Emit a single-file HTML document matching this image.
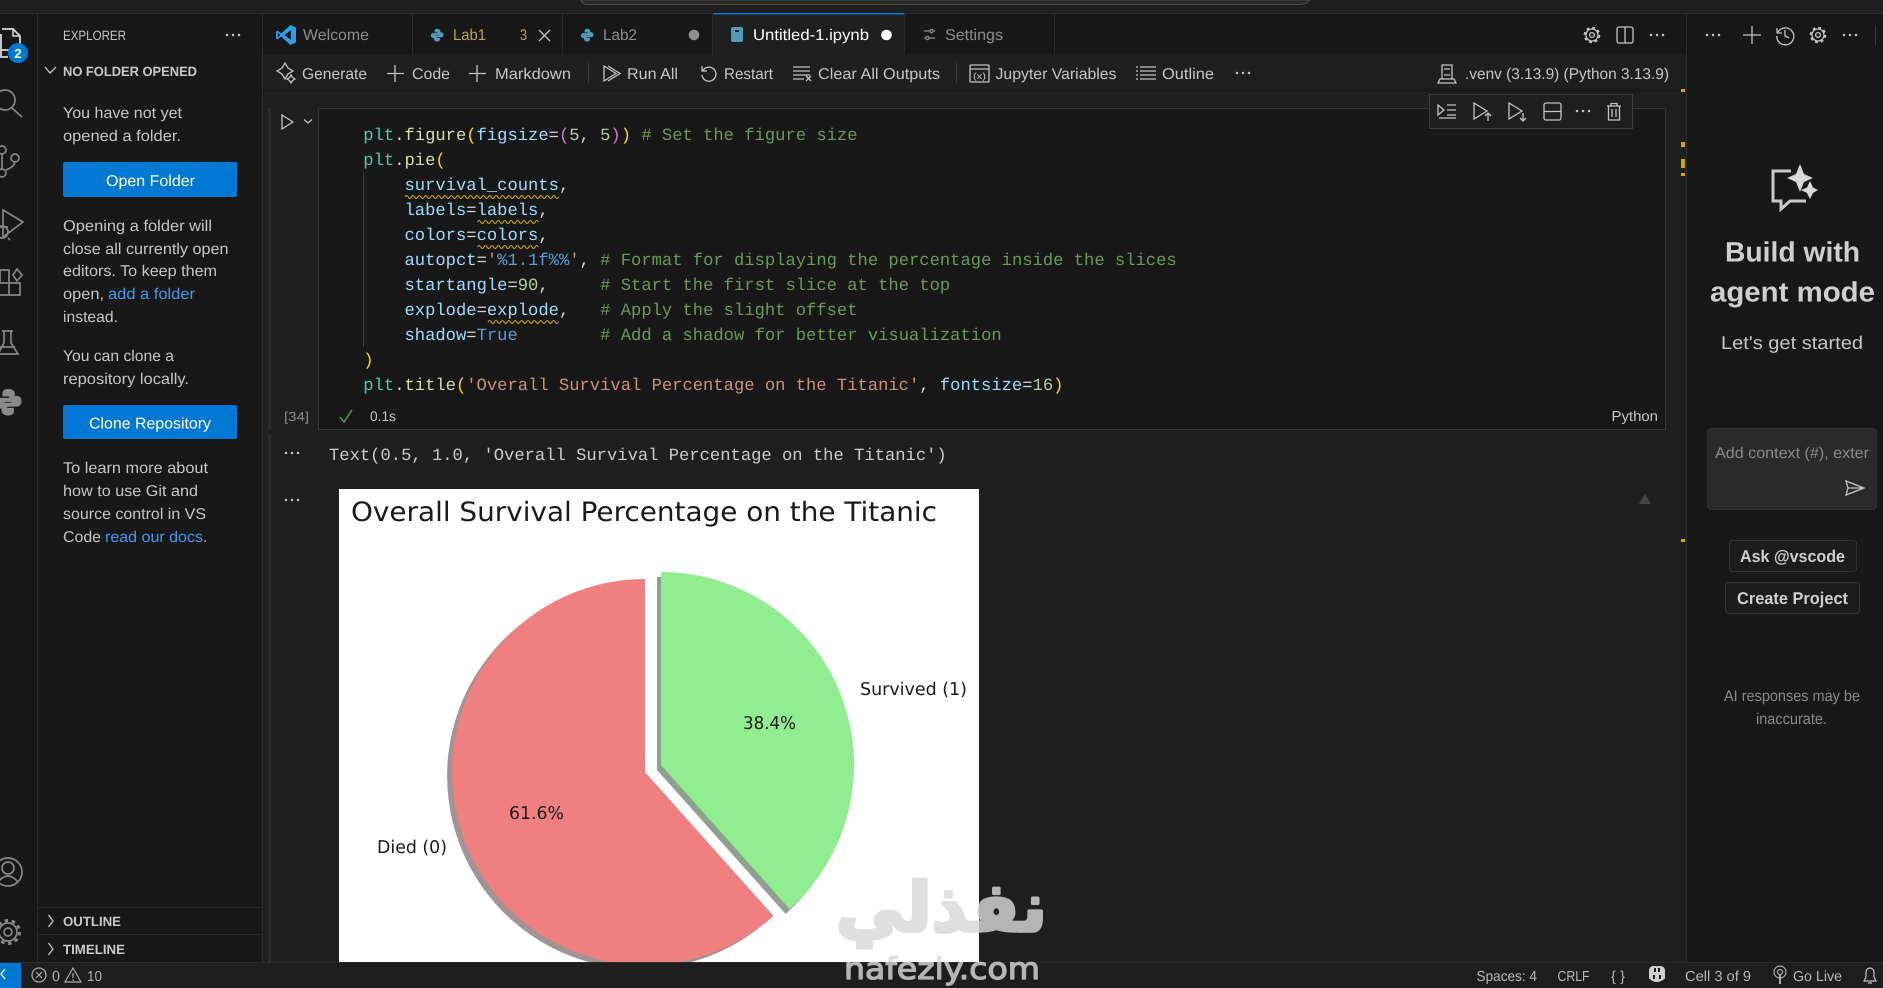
<!DOCTYPE html>
<html><head><meta charset="utf-8"><title>Untitled-1.ipynb</title>
<style>
html,body{margin:0;padding:0;background:#181818;width:1883px;height:988px;overflow:hidden}
svg{display:block;text-rendering:geometricPrecision;filter:blur(.35px)}
text{white-space:pre}
.u{font-family:"Liberation Sans",sans-serif;font-size:15.6px;fill:#c6c6c6}
.b{font-family:"Liberation Sans",sans-serif;font-size:13.5px;font-weight:bold;fill:#c9c9c9}
.m{font-family:"Liberation Mono",monospace;font-size:17.17px;fill:#d4d4d4}
.d{font-family:"DejaVu Sans",sans-serif;fill:#1a1a1a}
.i{fill:none;stroke:#c4c4c4;stroke-width:1.3}
.a{fill:none;stroke:#868686;stroke-width:1.7}
.t{fill:#4ec9b0}.f{fill:#dcdcaa}.y{fill:#ffd700}.v{fill:#9cdcfe}.p{fill:#da70d6}.n{fill:#b5cea8}.c{fill:#6a9955}.s{fill:#ce9178}.k{fill:#569cd6}
.w{fill:none;stroke:#cca700;stroke-width:1.1}
</style></head><body>
<svg width="1883" height="988" viewBox="0 0 1883 988" xmlns="http://www.w3.org/2000/svg">
<defs>
<g id="py"><path d="M8 1C5.2 1 5 2.4 5 3.5V5H8.5V5.7H3.5C2 5.7 1 7 1 8.5C1 10 2 11.3 3.5 11.3H5V9.6C5 8.5 6 7.8 7 7.8H10C11 7.8 11.5 7 11.5 6V3.5C11.5 2 10 1 8 1Z"/><path transform="rotate(180 8 8)" d="M8 1C5.2 1 5 2.4 5 3.5V5H8.5V5.7H3.5C2 5.7 1 7 1 8.5C1 10 2 11.3 3.5 11.3H5V9.6C5 8.5 6 7.8 7 7.8H10C11 7.8 11.5 7 11.5 6V3.5C11.5 2 10 1 8 1Z"/></g>
<g id="gear" fill="none" stroke="#c4c4c4"><circle r="6" stroke-width="1.3"/><circle r="7.2" stroke-width="2.2" stroke-dasharray="2.8 2.85"/><circle r="2.4" stroke-width="1.3"/></g>
<g id="dots" fill="#c4c4c4"><circle cx="-6" r="1.25"/><circle r="1.25"/><circle cx="6" r="1.25"/></g>
<clipPath id="img"><rect x="339" y="489" width="640" height="473"/></clipPath>
</defs>

<!-- base -->
<rect width="1883" height="988" fill="#181818"/>
<!-- title bar -->
<rect width="1883" height="13" fill="#1f1f1f"/>
<path d="M581 0Q582 4.5 588 4.5H1298Q1306 4.5 1310 0Z" fill="#2a2a2a" stroke="#4a4a4a"/>
<rect y="13" width="1883" height="1" fill="#2e2e2e"/>

<!-- editor bg -->
<rect x="263" y="14" width="1423" height="948" fill="#1f1f1f"/>
<rect x="263" y="14" width="1423" height="41" fill="#181818"/>
<rect x="263" y="54.5" width="1423" height="1" fill="#2b2b2b"/>
<rect x="263" y="55" width="1423" height="34" fill="#1f1f1f"/>
<rect x="263" y="88" width="1423" height="4" fill="#1a1a1a"/>

<!-- tabs -->
<rect x="263" y="14" width="149" height="41" fill="#181818"/>
<rect x="713" y="14" width="191" height="42" fill="#1f1f1f"/>
<rect x="713" y="13" width="191" height="1.5" fill="#0078d4"/>
<g fill="#2b2b2b"><rect x="412" y="14" width="1" height="41"/><rect x="562" y="14" width="1" height="41"/><rect x="712" y="14" width="1" height="41"/><rect x="904" y="14" width="1" height="41"/><rect x="1054" y="14" width="1" height="41"/></g>
<g transform="translate(276 25)"><path d="M14.5 0L20 2.4V17.6L14.5 20L5.2 11.6L1.6 14.4L0 13.5V6.5L1.6 5.6L5.2 8.4Z" fill="#2a9fe6"/><path d="M14.8 5.2L8.4 10L14.8 14.8Z" fill="#181818"/><path d="M1.8 7.6V12.4L4.2 10Z" fill="#181818"/></g>
<text class="u" x="303" y="40" textLength="66" lengthAdjust="spacingAndGlyphs" style="fill:#8d8d8d">Welcome</text>
<use href="#py" transform="translate(430 28) scale(.9)" fill="#519aba"/>
<text class="u" x="453" y="40" textLength="33" lengthAdjust="spacingAndGlyphs" style="fill:#c2a33f">Lab1</text>
<text class="u" x="520" y="40" textLength="7" lengthAdjust="spacingAndGlyphs" style="fill:#c2a33f">3</text>
<path d="M539 30L550 41M550 30L539 41" class="i"/>
<use href="#py" transform="translate(580 28) scale(.9)" fill="#519aba"/>
<text class="u" x="603" y="40" textLength="34" lengthAdjust="spacingAndGlyphs" style="fill:#8d8d8d">Lab2</text>
<circle cx="694" cy="35" r="5.3" fill="#8f8f8f"/>
<rect x="731" y="27" width="12" height="15" rx="2" fill="#519aba"/><rect x="735" y="30" width="4" height="2" fill="#1f1f1f"/>
<text class="u" x="753" y="40" textLength="116" lengthAdjust="spacingAndGlyphs" style="fill:#fff">Untitled-1.ipynb</text>
<circle cx="886.5" cy="35" r="5.3" fill="#fff"/>
<path d="M924 31H930M933 31H935M924 38H926M929 38H935" stroke="#8d8d8d" fill="none" stroke-width="1.2"/><circle cx="931.5" cy="31" r="1.6" class="i" style="stroke:#8d8d8d"/><circle cx="927.5" cy="38" r="1.6" class="i" style="stroke:#8d8d8d"/>
<text class="u" x="945" y="40" textLength="58" lengthAdjust="spacingAndGlyphs" style="fill:#8d8d8d">Settings</text>

<!-- editor actions -->
<use href="#gear" transform="translate(1592 35)"/>
<rect x="1617" y="27" width="16" height="16" rx="2" class="i" stroke-width="1.4"/><path d="M1625 27V43" class="i"/>
<use href="#dots" transform="translate(1657 35)"/>

<!-- toolbar -->
<g class="i"><path d="M283 64L286 69L291 72L286 75L283 80L280 75L275 72L280 69Z" transform="translate(2 -1) scale(1)" /><path d="M291 78l1.5 2.5 2.5 1.5-2.5 1.5-1.5 2.5-1.5-2.5-2.5-1.5 2.5-1.5z" transform="translate(0 -3)"/></g>
<text class="u" x="302" y="79" textLength="65" lengthAdjust="spacingAndGlyphs">Generate</text>
<path d="M395 65V82M387 73.5H404M477 65V82M469 73.5H486" class="i"/>
<text class="u" x="412" y="79" textLength="38" lengthAdjust="spacingAndGlyphs">Code</text>
<text class="u" x="495" y="79" textLength="76" lengthAdjust="spacingAndGlyphs">Markdown</text>
<rect x="588" y="63" width="1" height="20" fill="#3c3c3c"/>
<path d="M604 66V81L616 73.5ZM608 66L620 73.5L608 81" class="i"/>
<text class="u" x="627" y="79" textLength="51" lengthAdjust="spacingAndGlyphs">Run All</text>
<path d="M702 66V71H707M703 70.5A7 7 0 1 1 702 75" class="i"/>
<text class="u" x="724" y="79" textLength="49" lengthAdjust="spacingAndGlyphs">Restart</text>
<path d="M793 67H810M793 71H810M793 75H810M793 79H804M806 76L811 81M811 76L806 81" class="i"/>
<text class="u" x="818" y="79" textLength="122" lengthAdjust="spacingAndGlyphs">Clear All Outputs</text>
<rect x="956" y="63" width="1" height="20" fill="#3c3c3c"/>
<rect x="970" y="65" width="19" height="17" rx="1" class="i"/><path d="M970 69H989" class="i"/><text class="u" x="973" y="79" style="font-size:9px" textLength="13" lengthAdjust="spacingAndGlyphs">(x)</text>
<text class="u" x="995.5" y="79" textLength="121" lengthAdjust="spacingAndGlyphs">Jupyter Variables</text>
<path d="M1140 67H1156M1140 71H1156M1140 75H1156M1140 79H1156M1136 67H1138M1136 71H1138M1136 75H1138M1136 79H1138" class="i"/>
<text class="u" x="1162" y="79" textLength="52" lengthAdjust="spacingAndGlyphs">Outline</text>
<use href="#dots" transform="translate(1243 73)"/>
<path d="M1442 65H1452V79H1442ZM1440 79H1454L1456 83H1438ZM1444 69H1450M1444 75H1450" class="i"/>
<text class="u" x="1465" y="79" textLength="204" lengthAdjust="spacingAndGlyphs">.venv (3.13.9) (Python 3.13.9)</text>

<!-- overview ruler -->
<g fill="#d4a800"><rect x="1681" y="89" width="4" height="3"/><rect x="1681" y="142" width="4" height="5"/><rect x="1681" y="159" width="4" height="9"/><rect x="1681" y="173" width="4" height="3"/><rect x="1681" y="539" width="4" height="3"/></g>

<!-- sash -->
<rect x="268" y="108" width="3" height="322" fill="#2c2c2c"/>
<rect x="268" y="434" width="3" height="528" fill="#2c2c2c"/>

<!-- cell -->
<rect x="318.5" y="108.5" width="1347" height="321" fill="#181818" stroke="#363636"/>
<path d="M363.5 172V347" stroke="#404040" fill="none"/>
<path d="M282 115V129L293 122Z" class="i"/><path d="M304 119.5L308 123L312 119.5" class="i"/>
<text class="u" x="284" y="421" textLength="25" lengthAdjust="spacingAndGlyphs" style="font-size:13px;fill:#8a8a8a">[34]</text>
<path d="M340 417L344 422L352 410" fill="none" stroke="#4e9a52" stroke-width="1.5"/>
<text class="u" x="370" y="421" textLength="26" lengthAdjust="spacingAndGlyphs" style="font-size:14px">0.1s</text>
<text class="u" x="1611.5" y="421" textLength="46.5" lengthAdjust="spacingAndGlyphs" style="font-size:14.5px">Python</text>

<!-- code -->
<text class="m" x="363.3" y="140"><tspan class="t">plt</tspan>.<tspan class="f">figure</tspan><tspan class="y">(</tspan><tspan class="v">figsize</tspan>=<tspan class="p">(</tspan><tspan class="n">5</tspan>, <tspan class="n">5</tspan><tspan class="p">)</tspan><tspan class="y">)</tspan> <tspan class="c"># Set the figure size</tspan></text>
<text class="m" x="363.3" y="165"><tspan class="t">plt</tspan>.<tspan class="f">pie</tspan><tspan class="y">(</tspan></text>
<text class="m v" x="404.5" y="190">survival_counts<tspan style="fill:#d4d4d4">,</tspan></text>
<text class="m v" x="404.5" y="215">labels<tspan style="fill:#d4d4d4">=</tspan>labels<tspan style="fill:#d4d4d4">,</tspan></text>
<text class="m v" x="404.5" y="240">colors<tspan style="fill:#d4d4d4">=</tspan>colors<tspan style="fill:#d4d4d4">,</tspan></text>
<text class="m" x="404.5" y="265"><tspan class="v">autopct</tspan>=<tspan class="s">'</tspan><tspan class="k">%1.1f%%</tspan><tspan class="s">'</tspan>, <tspan class="c"># Format for displaying the percentage inside the slices</tspan></text>
<text class="m" x="404.5" y="290"><tspan class="v">startangle</tspan>=<tspan class="n">90</tspan>,     <tspan class="c"># Start the first slice at the top</tspan></text>
<text class="m" x="404.5" y="315"><tspan class="v">explode</tspan>=<tspan class="v">explode</tspan>,   <tspan class="c"># Apply the slight offset</tspan></text>
<text class="m" x="404.5" y="340"><tspan class="v">shadow</tspan>=<tspan class="k">True</tspan>        <tspan class="c"># Add a shadow for better visualization</tspan></text>
<text class="m y" x="363.3" y="365">)</text>
<text class="m" x="363.3" y="390"><tspan class="t">plt</tspan>.<tspan class="f">title</tspan><tspan class="y">(</tspan><tspan class="s">'Overall Survival Percentage on the Titanic'</tspan>, <tspan class="v">fontsize</tspan>=<tspan class="n">16</tspan><tspan class="y">)</tspan></text>
<path class="w" d="M405 197q1.6-3 3.2 0t3.2 0 3.2 0 3.2 0 3.2 0 3.2 0 3.2 0 3.2 0 3.2 0 3.2 0 3.2 0 3.2 0 3.2 0 3.2 0 3.2 0 3.2 0 3.2 0 3.2 0 3.2 0 3.2 0 3.2 0 3.2 0 3.2 0 3.2 0 3.2 0 3.2 0 3.2 0 3.2 0 3.2 0 3.2 0 3.2 0 3.2 0 3.2 0 3.2 0 3.2 0 3.2 0 3.2 0 3.2 0 3.2 0 3.2 0 3.2 0 3.2 0 3.2 0 3.2 0 3.2 0 3.2 0 3.2 0 3.2 0"/>
<path class="w" d="M477.5 222q1.6-3 3.2 0t3.2 0 3.2 0 3.2 0 3.2 0 3.2 0 3.2 0 3.2 0 3.2 0 3.2 0 3.2 0 3.2 0 3.2 0 3.2 0 3.2 0 3.2 0 3.2 0 3.2 0 3.2 0"/>
<path class="w" d="M477.5 247q1.6-3 3.2 0t3.2 0 3.2 0 3.2 0 3.2 0 3.2 0 3.2 0 3.2 0 3.2 0 3.2 0 3.2 0 3.2 0 3.2 0 3.2 0 3.2 0 3.2 0 3.2 0 3.2 0 3.2 0"/>
<path class="w" d="M488 322q1.6-3 3.2 0t3.2 0 3.2 0 3.2 0 3.2 0 3.2 0 3.2 0 3.2 0 3.2 0 3.2 0 3.2 0 3.2 0 3.2 0 3.2 0 3.2 0 3.2 0 3.2 0 3.2 0 3.2 0 3.2 0 3.2 0 3.2 0"/>

<!-- cell toolbar -->
<rect x="1429.5" y="94.5" width="203" height="34" fill="#1f1f1f" stroke="#3c3c3c"/>
<path d="M1438 105V115L1444 110ZM1447 105H1456M1447 110H1456M1447 115H1456M1439 118H1456" class="i"/>
<path d="M1474 103V119L1487 111ZM1488 121V113M1485 116L1488 113L1491 116" class="i"/>
<path d="M1509 103V119L1522 111ZM1523 113V121M1520 118L1523 121L1526 118" class="i"/>
<rect x="1544" y="103" width="17" height="17" rx="2" class="i"/><path d="M1544 111.5H1561" class="i"/>
<use href="#dots" transform="translate(1583 111)"/>
<path d="M1607 106H1621M1611 106V103.5H1617V106M1608.5 106V120H1619.5V106M1612 109V117M1616 109V117" class="i"/>

<!-- outputs -->
<use href="#dots" transform="translate(292 453)"/>
<text class="m" x="329" y="460" style="fill:#cccccc">Text(0.5, 1.0, 'Overall Survival Percentage on the Titanic')</text>
<use href="#dots" transform="translate(292 500)"/>
<path d="M1639 504L1645 494L1651 504Z" fill="#444"/>

<!-- figure -->
<rect x="339" y="489" width="640" height="473" fill="#fff"/>
<g clip-path="url(#img)">
<path transform="translate(-5 4)" d="M645 772L645 579A193 193 0 1 0 773.6 916Z" fill="#a09494"/>
<path transform="translate(-4 5)" d="M661 765L661 572A193 193 0 0 1 789.6 909Z" fill="#8f9f90"/>
<path d="M645 772L645 579A193 193 0 1 0 773.6 916Z" fill="#f08080"/>
<path d="M661 765L661 572A193 193 0 0 1 789.6 909Z" fill="#90ee90"/>
</g>
<text class="d" x="351" y="521" textLength="586" lengthAdjust="spacingAndGlyphs" style="font-size:26.7px">Overall Survival Percentage on the Titanic</text>
<text class="d" x="860" y="695" textLength="107" lengthAdjust="spacingAndGlyphs" style="font-size:17.6px">Survived (1)</text>
<text class="d" x="377" y="853" textLength="70" lengthAdjust="spacingAndGlyphs" style="font-size:17.6px">Died (0)</text>
<text class="d" x="743" y="729" textLength="53" lengthAdjust="spacingAndGlyphs" style="font-size:17.6px">38.4%</text>
<text class="d" x="509" y="819" textLength="55" lengthAdjust="spacingAndGlyphs" style="font-size:17.6px">61.6%</text>

<!-- status bar -->
<rect y="962" width="1883" height="26" fill="#1e1e1e"/>
<rect y="962" width="1883" height="1" fill="#2b2b2b"/>
<rect y="963" width="21" height="25" fill="#0078d4"/>
<path d="M5 969L1 974L5 979" fill="none" stroke="#fff" stroke-width="1.3"/>

<!-- right panel -->
<rect x="1686" y="14" width="197" height="948" fill="#181818"/>
<rect x="1686" y="14" width="1" height="948" fill="#2b2b2b"/>
<use href="#dots" transform="translate(1713 35)"/>
<path d="M1752 26V44M1743 35H1761" class="i"/>
<path d="M1777 28V33H1782M1778 32A8.5 8.5 0 1 1 1776.8 36M1785 30V36L1789 38" class="i"/>
<use href="#gear" transform="translate(1818 35)"/>
<use href="#dots" transform="translate(1850 35)"/>
<rect x="1875" y="25" width="1" height="20" fill="#3c3c3c"/>
<path d="M1791 171H1773V201H1781V209L1790 201H1806" fill="none" stroke="#c8c8c8" stroke-width="3"/>
<path d="M1800 164L1804 174L1813 178L1804 182L1800 192L1796 182L1787 178L1796 174Z" fill="#d8d8d8"/>
<path d="M1810 181L1813 187.500L1818 190L1813 193L1810 199L1807 193L1801 190L1807 187.500Z" fill="#d8d8d8"/>
<text class="u" x="1725" y="261.5" textLength="135" lengthAdjust="spacingAndGlyphs" style="font-size:28px;font-weight:bold;fill:#cfcfcf">Build with</text>
<text class="u" x="1710" y="301.5" textLength="165" lengthAdjust="spacingAndGlyphs" style="font-size:28px;font-weight:bold;fill:#cfcfcf">agent mode</text>
<text class="u" x="1721" y="349" textLength="142" lengthAdjust="spacingAndGlyphs" style="font-size:18.5px">Let's get started</text>
<rect x="1707.500" y="428.500" width="169" height="81" rx="4" fill="#2a2a2a" stroke="#333"/>
<text class="u" x="1715" y="458" textLength="154" lengthAdjust="spacingAndGlyphs" style="fill:#8a8a8a">Add context (#), exter</text>
<path d="M1846 481L1864 488L1846 495L1848 488ZM1848 488H1864" class="i"/>
<rect x="1729.500" y="540.500" width="127" height="31" rx="3" fill="#1c1c1c" stroke="#333"/>
<text class="u" x="1740" y="562" textLength="105" lengthAdjust="spacingAndGlyphs" style="font-size:17px;font-weight:bold;fill:#cfcfcf">Ask @vscode</text>
<rect x="1725.500" y="582.500" width="134" height="31" rx="3" fill="#1c1c1c" stroke="#333"/>
<text class="u" x="1737" y="604" textLength="111" lengthAdjust="spacingAndGlyphs" style="font-size:17px;font-weight:bold;fill:#cfcfcf">Create Project</text>
<text class="u" x="1724" y="701" textLength="136" lengthAdjust="spacingAndGlyphs" style="fill:#8a8a8a">AI responses may be</text>
<text class="u" x="1756" y="724" textLength="71" lengthAdjust="spacingAndGlyphs" style="fill:#8a8a8a">inaccurate.</text>

<!-- sidebar -->
<rect x="37" y="14" width="1" height="948" fill="#2b2b2b"/>
<rect x="262" y="14" width="1" height="948" fill="#2b2b2b"/>
<text class="u" x="63" y="40" textLength="63" lengthAdjust="spacingAndGlyphs" style="font-size:13.5px">EXPLORER</text>
<use href="#dots" transform="translate(233 35)"/>
<path d="M45 67L50 73L56 67" class="i"/>
<text class="b" x="63" y="76" textLength="134" lengthAdjust="spacingAndGlyphs">NO FOLDER OPENED</text>
<text class="u" x="63" y="118" textLength="119" lengthAdjust="spacingAndGlyphs">You have not yet</text>
<text class="u" x="63" y="141" textLength="118" lengthAdjust="spacingAndGlyphs">opened a folder.</text>
<rect x="63" y="162" width="174" height="35" rx="2" fill="#0078d4"/>
<text class="u" x="106" y="186" textLength="89" lengthAdjust="spacingAndGlyphs" style="fill:#fff">Open Folder</text>
<text class="u" x="63" y="231" textLength="149" lengthAdjust="spacingAndGlyphs">Opening a folder will</text>
<text class="u" x="63" y="254" textLength="165.500" lengthAdjust="spacingAndGlyphs">close all currently open</text>
<text class="u" x="63" y="276" textLength="154" lengthAdjust="spacingAndGlyphs">editors. To keep them</text>
<text class="u" x="63" y="299" textLength="41" lengthAdjust="spacingAndGlyphs">open,</text>
<text class="u" x="108" y="299" textLength="87" lengthAdjust="spacingAndGlyphs" style="fill:#3f9bf0">add a folder</text>
<text class="u" x="63" y="322" textLength="55" lengthAdjust="spacingAndGlyphs">instead.</text>
<text class="u" x="63" y="361" textLength="111" lengthAdjust="spacingAndGlyphs">You can clone a</text>
<text class="u" x="63" y="384" textLength="126" lengthAdjust="spacingAndGlyphs">repository locally.</text>
<rect x="63" y="405" width="174" height="34" rx="2" fill="#0078d4"/>
<text class="u" x="89" y="428.500" textLength="122" lengthAdjust="spacingAndGlyphs" style="fill:#fff">Clone Repository</text>
<text class="u" x="63" y="473" textLength="145" lengthAdjust="spacingAndGlyphs">To learn more about</text>
<text class="u" x="63" y="496" textLength="135" lengthAdjust="spacingAndGlyphs">how to use Git and</text>
<text class="u" x="63" y="519" textLength="143" lengthAdjust="spacingAndGlyphs">source control in VS</text>
<text class="u" x="63" y="542" textLength="38" lengthAdjust="spacingAndGlyphs">Code</text>
<text class="u" x="105" y="542" textLength="98" lengthAdjust="spacingAndGlyphs" style="fill:#3f9bf0">read our docs</text>
<text class="u" x="203" y="542">.</text>
<rect x="38" y="907" width="224" height="1" fill="#2b2b2b"/>
<rect x="38" y="934" width="224" height="1" fill="#2b2b2b"/>
<path d="M48.500 915L53 921L48.500 927M48.500 943L53 949L48.500 955" class="i"/>
<text class="b" x="63" y="926" textLength="58" lengthAdjust="spacingAndGlyphs">OUTLINE</text>
<text class="b" x="63" y="954" textLength="62" lengthAdjust="spacingAndGlyphs">TIMELINE</text>

<!-- activity bar -->
<path d="M2 29H13L20 36V50H1" fill="none" stroke="#d8d8d8" stroke-width="1.8"/><path d="M13 29V36H20" fill="none" stroke="#d8d8d8" stroke-width="1.5"/><path d="M1 34V57H8" fill="none" stroke="#d8d8d8" stroke-width="1.8"/>
<circle cx="18" cy="53" r="10" fill="#0078d4"/>
<text x="18" y="58" text-anchor="middle" style="font:bold 13px 'Liberation Sans',sans-serif;fill:#fff">2</text>
<circle cx="5" cy="100" r="10" class="a"/><path d="M12 108L22 117" class="a"/>
<circle cx="2" cy="150" r="4" class="a"/><circle cx="2" cy="173" r="4" class="a"/><circle cx="15" cy="158" r="4" class="a"/><path d="M2 154V169M15 162Q14 167 6 170" class="a"/>
<path d="M3 210V237L23 222Z" class="a"/><circle cx="2" cy="232" r="6" class="a"/><path d="M-4 227H8M8 232H10M8 238L10 240" class="a"/>
<path d="M0 283H9V295H0M0 283V270H9V283M9 283H20V295H9" class="a"/><path d="M13 275L17 269L22 275L17 281Z" class="a"/>
<path d="M2 331H13M4 331V343L-2 354H18L11 343V331M0 347H15" class="a"/>
<use href="#py" transform="translate(-7 387) scale(1.9)" fill="#8a8a8a"/>
<circle cx="8" cy="872" r="14" class="a"/><circle cx="8" cy="868" r="6" class="a"/><path d="M-2 882Q8 870 18 882" class="a"/>
<circle cx="8" cy="932" r="4" class="a"/><circle cx="8" cy="932" r="9" class="a"/><circle cx="8" cy="932" r="11.500" fill="none" stroke="#868686" stroke-width="3" stroke-dasharray="3.500 3.700"/>

<!-- status text -->
<circle cx="39" cy="975" r="7" fill="none" stroke="#aaa" stroke-width="1.2"/><path d="M36 972L42 978M42 972L36 978" fill="none" stroke="#aaa" stroke-width="1.200"/>
<text class="u" x="52" y="981" textLength="8" lengthAdjust="spacingAndGlyphs" style="font-size:14.5px;fill:#b0b0b0">0</text>
<path d="M73 968L81 982H65Z M73 973V978M73 979.500V981" fill="none" stroke="#aaa" stroke-width="1.200"/>
<text class="u" x="87" y="981" textLength="15" lengthAdjust="spacingAndGlyphs" style="font-size:14.5px;fill:#b0b0b0">10</text>
<text class="u" x="1476.500" y="981" textLength="60.500" lengthAdjust="spacingAndGlyphs" style="font-size:14.5px;fill:#b8b8b8">Spaces: 4</text>
<text class="u" x="1557.500" y="981" textLength="32" lengthAdjust="spacingAndGlyphs" style="font-size:14.5px;fill:#b8b8b8">CRLF</text>
<text class="u" x="1611" y="981" textLength="14" lengthAdjust="spacing" style="font-size:14.5px;fill:#b8b8b8">{}</text>
<path d="M1650 978V971Q1650 967 1654 967H1656Q1657 968 1657 969Q1657 968 1658 967H1660Q1664 967 1664 971V978Q1657 984 1650 978Z" fill="#d0d0d0" stroke="#d0d0d0" stroke-width="2"/><rect x="1654" y="968" width="2" height="4" fill="#1e1e1e"/><rect x="1658" y="968" width="2" height="4" fill="#1e1e1e"/><rect x="1653" y="975" width="2" height="4" fill="#1e1e1e"/><rect x="1659" y="975" width="2" height="4" fill="#1e1e1e"/>
<text class="u" x="1685" y="981" textLength="66" lengthAdjust="spacingAndGlyphs" style="font-size:14.5px;fill:#b8b8b8">Cell 3 of 9</text>
<circle cx="1780" cy="972" r="6" fill="none" stroke="#aaa" stroke-width="1.200"/><circle cx="1780" cy="972" r="2.500" fill="none" stroke="#aaa" stroke-width="1.200"/><path d="M1780 975V984" stroke="#aaa" stroke-width="2"/>
<text class="u" x="1793" y="981" textLength="49" lengthAdjust="spacingAndGlyphs" style="font-size:14.5px;fill:#b8b8b8">Go Live</text>
<path d="M1864 981H1876L1874 977V972A4 4 0 0 0 1866 972V977ZM1868 983H1872" fill="none" stroke="#c4c4c4" stroke-width="1.200"/>

<!-- watermark -->
<g fill="#d8d8d8" stroke="#d8d8d8" stroke-linejoin="round" opacity=".81">
<text x="836" y="931" textLength="211" lengthAdjust="spacingAndGlyphs" stroke-width="3.5" style="font-family:'DejaVu Sans',sans-serif;font-weight:bold;font-size:68px" direction="rtl" text-anchor="end">نفذلي</text>
<text x="844" y="979" textLength="196" lengthAdjust="spacingAndGlyphs" stroke-width="1.2" style="font-family:'DejaVu Sans',sans-serif;font-size:30px">nafezly.com</text>
</g>
</svg>
</body></html>
